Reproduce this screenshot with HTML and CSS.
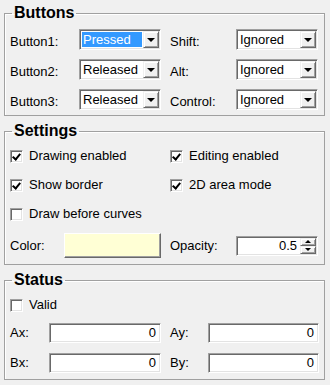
FILE: index.html
```html
<!DOCTYPE html>
<html lang="en">
<head>
    <title>Probe Settings</title>
    <link rel="stylesheet" href="styles.css">
</head>
<body>
    <fieldset class="group">
        <legend>Buttons</legend>
        <div class="btn-grid">
            <span class="lbl">Button1:</span>
            <div class="combo"><span class="val sel">Pressed</span><span class="drop"><i class="tri"></i></span></div>
            <span class="lbl right">Shift:</span>
            <div class="combo"><span class="val">Ignored</span><span class="drop"><i class="tri"></i></span></div>

            <span class="lbl">Button2:</span>
            <div class="combo"><span class="val">Released</span><span class="drop"><i class="tri"></i></span></div>
            <span class="lbl right">Alt:</span>
            <div class="combo"><span class="val">Ignored</span><span class="drop"><i class="tri"></i></span></div>

            <span class="lbl">Button3:</span>
            <div class="combo"><span class="val">Released</span><span class="drop"><i class="tri"></i></span></div>
            <span class="lbl right">Control:</span>
            <div class="combo"><span class="val">Ignored</span><span class="drop"><i class="tri"></i></span></div>
        </div>
    </fieldset>

    <fieldset class="group">
        <legend>Settings</legend>
        <div class="set-grid">
            <label class="check"><span class="box on"></span>Drawing enabled</label>
            <label class="check"><span class="box on"></span>Editing enabled</label>
            <label class="check"><span class="box on"></span>Show border</label>
            <label class="check"><span class="box on"></span>2D area mode</label>
            <label class="check"><span class="box"></span>Draw before curves</label>
            <span></span>
            <div class="pair">
                <span class="lbl">Color:</span>
                <span class="swatch"></span>
            </div>
            <div class="pair">
                <span class="lbl">Opacity:</span>
                <div class="spin">
                    <span class="num">0.5</span>
                    <span class="arrows">
                        <span class="step"><i class="tri up"></i></span>
                        <span class="step"><i class="tri"></i></span>
                    </span>
                </div>
            </div>
        </div>
    </fieldset>

    <fieldset class="group">
        <legend>Status</legend>
        <label class="check valid"><span class="box"></span>Valid</label>
        <div class="stat-grid">
            <span class="lbl">Ax:</span>
            <span class="field">0</span>
            <span class="lbl right">Ay:</span>
            <span class="field">0</span>
            <span class="lbl">Bx:</span>
            <span class="field">0</span>
            <span class="lbl right">By:</span>
            <span class="field">0</span>
        </div>
    </fieldset>
</body>
</html>
```

FILE: styles.css
```css
html, body {
    background-color: #f0f0f0;
}

body {
    margin: 0;
    padding: 3px 5px 0 4px;
    font-family: "Liberation Sans", Arial, sans-serif;
    font-size: 13px;
    color: #000;
}

/* group boxes */
.group {
    margin: 0 0 5px 0;
    padding: 0 5px 6px 5px;
    border: 1px solid #a0a0a0;
    box-shadow: inset 1px 1px 0 #fff;
    min-width: 0;
}

.group legend {
    margin-left: 2px;
    padding: 0 2px;
    font-size: 16px;
    font-weight: bold;
    line-height: 20px;
}

.lbl {
    line-height: 20px;
    white-space: nowrap;
}

.lbl.right {
    padding-left: 9px;
}

/* buttons box */
.group.first {
    padding-bottom: 5px;
}

.btn-grid {
    display: grid;
    grid-template-columns: 69px 82px 75px 82px;
    row-gap: 9px;
    grid-auto-rows: 21px;
    margin-top: 6px;
    margin-bottom: -1px;
}

.btn-grid .lbl {
    line-height: 25px;
    align-self: start;
}

.combo {
    display: flex;
    align-items: stretch;
    height: 21px;
    box-sizing: border-box;
    padding: 1px;
    background: #fff;
    border: 1px solid;
    border-color: #a0a0a0 #fff #fff #a0a0a0;
    box-shadow: inset 1px 1px 0 #696969, inset -1px -1px 0 #e3e3e3;
}

.combo .val {
    flex: 1;
    margin: 1px;
    padding: 1px 0 0 1px;
    line-height: 14px;
}

.combo .val.sel {
    background-color: #3399ff;
    color: #fff;
}

.drop,
.step {
    display: flex;
    align-items: center;
    justify-content: center;
    box-sizing: border-box;
    background-color: #f0f0f0;
    border: 1px solid;
    border-color: #f0f0f0 #696969 #696969 #f0f0f0;
    box-shadow: inset 1px 1px 0 #fff, inset -1px -1px 0 #a0a0a0;
}

.drop {
    width: 16px;
}

.tri {
    width: 0;
    height: 0;
    border-left: 4px solid transparent;
    border-right: 4px solid transparent;
    border-top: 4px solid #000;
}

.tri.up {
    border-top: 0;
    border-bottom: 4px solid #000;
}

/* settings box */
.set-grid {
    display: grid;
    grid-template-columns: 151px 148px;
    column-gap: 9px;
    grid-template-rows: 20px 20px 20px 25px;
    row-gap: 9px;
    margin-top: 5px;
}

.check {
    display: flex;
    align-items: center;
    gap: 6px;
    line-height: 20px;
}

.box {
    width: 13px;
    height: 13px;
    box-sizing: border-box;
    background: #fff;
    border: 1px solid;
    border-color: #a0a0a0 #fff #fff #a0a0a0;
    box-shadow: inset 1px 1px 0 #696969, inset -1px -1px 0 #e3e3e3;
    position: relative;
}

.box.on::after {
    content: "";
    position: absolute;
    left: 3px;
    top: 1px;
    width: 3px;
    height: 6px;
    border: solid #000;
    border-width: 0 2px 2px 0;
    transform: rotate(40deg);
}

.pair {
    display: flex;
    align-items: center;
    justify-content: space-between;
}

.swatch {
    width: 97px;
    height: 25px;
    box-sizing: border-box;
    background-color: #ffffd5;
    border: 1px solid;
    border-color: #fff #696969 #696969 #fff;
    box-shadow: inset -1px -1px 0 #a0a0a0;
}

.spin {
    display: flex;
    width: 82px;
    height: 20px;
    box-sizing: border-box;
    padding: 1px;
    background: #fff;
    border: 1px solid;
    border-color: #a0a0a0 #fff #fff #a0a0a0;
    box-shadow: inset 1px 1px 0 #696969, inset -1px -1px 0 #e3e3e3;
}

.spin .num {
    flex: 1;
    text-align: right;
    padding-right: 3px;
    line-height: 16px;
}

.arrows {
    display: flex;
    flex-direction: column;
    width: 16px;
}

.step {
    flex: 1;
}

.step .tri {
    border-left-width: 3px;
    border-right-width: 3px;
    border-top-width: 3px;
}

.step .tri.up {
    border-bottom-width: 3px;
    border-top-width: 0;
}

/* status box */
.valid {
    margin-top: 5px;
}

.stat-grid {
    display: grid;
    grid-template-columns: 39px 112px 47px 111px;
    row-gap: 10px;
    grid-auto-rows: 20px;
    align-items: center;
    margin-top: 8px;
}

.field {
    height: 20px;
    box-sizing: border-box;
    padding-right: 4px;
    text-align: right;
    line-height: 18px;
    background: #fff;
    border: 1px solid;
    border-color: #a0a0a0 #fff #fff #a0a0a0;
    box-shadow: inset 1px 1px 0 #696969, inset -1px -1px 0 #e3e3e3;
}
```
